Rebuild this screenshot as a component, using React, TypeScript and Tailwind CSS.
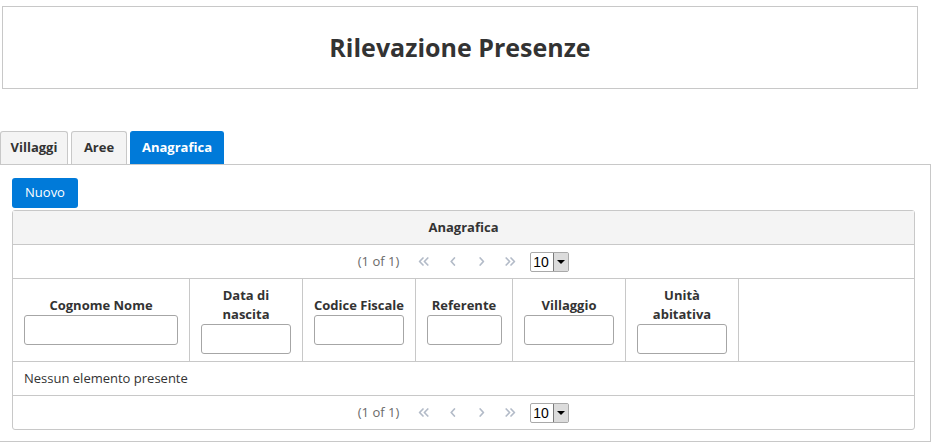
import React from "react";

const Chev = ({ dir, dbl }: { dir: "l" | "r"; dbl?: boolean }) => {
  const paths: string[] = [];
  if (dbl) {
    if (dir === "l") {
      paths.push("M5 1 L1.6 4.5 L5 8", "M9.8 1 L6.4 4.5 L9.8 8");
    } else {
      paths.push("M1.2 1 L4.6 4.5 L1.2 8", "M6 1 L9.4 4.5 L6 8");
    }
  } else {
    if (dir === "l") paths.push("M4.4 1 L1.2 4.5 L4.4 8");
    else paths.push("M1.2 1 L4.4 4.5 L1.2 8");
  }
  const w = dbl ? 11 : 6;
  return (
    <svg width={w} height={9} viewBox={`0 0 ${w} 9`} fill="none">
      {paths.map((d, i) => (
        <path key={i} d={d} stroke="#b3bbc8" strokeWidth={1.7} strokeLinecap="round" strokeLinejoin="round" />
      ))}
    </svg>
  );
};

const Paginator = ({ h }: { h: string }) => (
  <div className={`flex items-center justify-center ${h}`}>
    <span className="text-[#6a6a6a] mr-[10px]">(1 of 1)</span>
    <span className="w-[29px] flex justify-center"><Chev dir="l" dbl /></span>
    <span className="w-[29px] flex justify-center"><Chev dir="l" /></span>
    <span className="w-[29px] flex justify-center"><Chev dir="r" /></span>
    <span className="w-[29px] flex justify-center"><Chev dir="r" dbl /></span>
    <div className="ml-[5px] w-[39px] h-[20px] border border-[#a9a9a9] rounded-[2px] flex bg-white">
      <span className="font-['Liberation_Sans',Arial,sans-serif] text-[14px] leading-[18px] pl-[2px] text-black">10</span>
      <span className="ml-auto w-[15px] h-full bg-[#dcdcdc] border-l border-[#7a7a7a] flex items-center justify-center">
        <span className="w-0 h-0 border-l-[4px] border-r-[4px] border-t-[4px] border-l-transparent border-r-transparent border-t-black" />
      </span>
    </div>
  </div>
);

const Col = ({ label, w }: { label: React.ReactNode; w: string }) => (
  <div className="border-r border-[#c8c8c8] flex flex-col items-center justify-center leading-[19px]">
    <div className="font-bold text-center">{label}</div>
    <div className={`${w} h-[30px] border border-[#a6a6a6] rounded-[3px] bg-white`} />
  </div>
);

export default function App() {
  return (
    <div className="font-['Open_Sans',sans-serif] text-[13px] text-[#333] bg-white w-[935px] h-[446px] overflow-hidden">
      <div className="pt-[6px] pl-[2px]">
        <div className="w-[916px] h-[83px] border border-[#c8c8c8] flex items-center justify-center">
          <h1 className="text-[25px] font-bold text-[#333]">Rilevazione Presenze</h1>
        </div>
      </div>

      <div className="mt-[42px]">
        <div className="flex gap-[3px] h-[33px]">
          <div className="w-[68px] border border-b-0 border-[#c8c8c8] rounded-t-[3px] bg-[#f4f4f4] font-bold flex items-center justify-center">Villaggi</div>
          <div className="w-[56px] border border-b-0 border-[#c8c8c8] rounded-t-[3px] bg-[#f4f4f4] font-bold flex items-center justify-center">Aree</div>
          <div className="w-[94px] border border-b-0 border-[#007ad9] rounded-t-[3px] bg-[#007ad9] text-white font-bold flex items-center justify-center">Anagrafica</div>
        </div>

        <div className="w-[931px] h-[278px] border-t border-r border-b border-[#c8c8c8] pt-[13px] pl-[12px]">
          <button className="h-[30px] w-[66px] bg-[#007ad9] text-white rounded-[3px] flex items-center justify-center mb-[2px]">Nuovo</button>

          <div className="w-[903px] border border-[#c8c8c8] rounded-[3px]">
            <div className="h-[34px] bg-[#f4f4f4] border-b border-[#c8c8c8] font-bold flex items-center justify-center">Anagrafica</div>
            <div className="border-b border-[#c8c8c8]">
              <Paginator h="h-[33px]" />
            </div>
            <div className="h-[83px] border-b border-[#c8c8c8] grid grid-cols-[177px_113px_113px_97px_113px_113px_1fr]">
              <Col label="Cognome Nome" w="w-[154px]" />
              <Col label={<>Data di<br />nascita</>} w="w-[90px]" />
              <Col label="Codice Fiscale" w="w-[90px]" />
              <Col label="Referente" w="w-[75px]" />
              <Col label="Villaggio" w="w-[90px]" />
              <Col label={<>Unità<br />abitativa</>} w="w-[90px]" />
              <div />
            </div>
            <div className="h-[34px] border-b border-[#c8c8c8] flex items-center pl-[11px]">Nessun elemento presente</div>
            <Paginator h="h-[33px]" />
          </div>
        </div>
      </div>
    </div>
  );
}
